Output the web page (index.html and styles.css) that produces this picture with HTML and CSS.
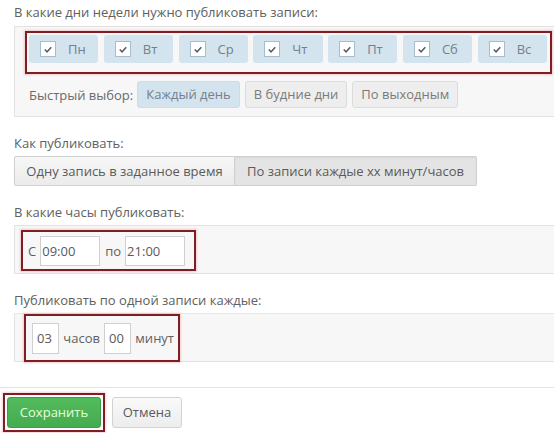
FILE: index.html
```html
<!DOCTYPE html>
<html lang="ru">
<head>
<meta charset="utf-8">
<link rel="stylesheet" href="styles.css">
</head>
<body>
<div class="page">
  <div class="label first">В какие дни недели нужно публиковать записи:</div>
  <div class="panel days-panel">
    <div class="mark days-mark">
      <div class="days">
        <div class="day"><span class="cb"><svg viewBox="0 0 15 15" width="15" height="15"><polyline points="4,7.5 6.5,10 11,5" /></svg></span><span>Пн</span></div>
        <div class="day"><span class="cb"><svg viewBox="0 0 15 15" width="15" height="15"><polyline points="4,7.5 6.5,10 11,5" /></svg></span><span>Вт</span></div>
        <div class="day"><span class="cb"><svg viewBox="0 0 15 15" width="15" height="15"><polyline points="4,7.5 6.5,10 11,5" /></svg></span><span>Ср</span></div>
        <div class="day"><span class="cb"><svg viewBox="0 0 15 15" width="15" height="15"><polyline points="4,7.5 6.5,10 11,5" /></svg></span><span>Чт</span></div>
        <div class="day"><span class="cb"><svg viewBox="0 0 15 15" width="15" height="15"><polyline points="4,7.5 6.5,10 11,5" /></svg></span><span>Пт</span></div>
        <div class="day"><span class="cb"><svg viewBox="0 0 15 15" width="15" height="15"><polyline points="4,7.5 6.5,10 11,5" /></svg></span><span>Сб</span></div>
        <div class="day"><span class="cb"><svg viewBox="0 0 15 15" width="15" height="15"><polyline points="4,7.5 6.5,10 11,5" /></svg></span><span>Вс</span></div>
      </div>
    </div>
    <div class="quick">
      <span class="quick-label">Быстрый выбор:</span>
      <span class="qbtn active">Каждый день</span>
      <span class="qbtn">В будние дни</span>
      <span class="qbtn">По выходным</span>
    </div>
  </div>

  <div class="label">Как публиковать:</div>
  <div class="toggle">
    <span class="tbtn">Одну запись в заданное время</span>
    <span class="tbtn on">По записи каждые хх минут/часов</span>
  </div>

  <div class="label">В какие часы публиковать:</div>
  <div class="panel hours-panel">
    <div class="mark hours-mark">
      <span>С</span><span class="inp wide">09:00</span>
      <span class="po">по</span><span class="inp wide">21:00</span>
    </div>
  </div>

  <div class="label">Публиковать по одной записи каждые:</div>
  <div class="panel every-panel">
    <div class="mark every-mark">
      <span class="inp narrow">03</span><span class="unit">часов</span>
      <span class="inp narrow">00</span><span class="unit">минут</span>
    </div>
  </div>
</div>
<div class="footer">
  <div class="mark save-mark"><span class="btn save">Сохранить</span></div>
  <span class="btn cancel">Отмена</span>
</div>
</body>
</html>
```

FILE: styles.css
```css
html, body {
  margin: 0;
  padding: 0;
  background: #fff;
  overflow: hidden;
}
body {
  font-family: "Open Sans", "Liberation Sans", sans-serif;
  font-size: 13px;
  color: #606060;
  width: 554px;
  height: 433px;
}
.page {
  padding-left: 14px;
}
.label {
  line-height: 18px;
  height: 18px;
  margin-top: 17px;
  margin-bottom: 4px;
  white-space: nowrap;
}
.label.first {
  margin-top: 3px;
  margin-bottom: 5px;
}
.panel {
  background: #f7f7f7;
  border: 1px solid #e2e2e2;
  width: 560px;
  box-sizing: border-box;
}
.mark {
  border: 2px solid #7d1e24;
  box-shadow: 0 0 2px 1px rgba(230, 120, 120, 0.35);
  box-sizing: border-box;
}
.days-panel {
  height: 91px;
  padding: 4px 0 0 10px;
}
.days-mark {
  width: 527px;
  height: 43px;
  padding: 2px 3px 0 2px;
}
.days {
  display: flex;
  gap: 5.5px;
}
.day {
  flex: 1;
  height: 28px;
  background: #d3e4ef;
  border-radius: 3px;
  display: flex;
  align-items: center;
  padding-left: 11px;
  color: #75808a;
}
.cb {
  width: 16px;
  height: 16px;
  background: #fff;
  border: 1px solid #a9bccb;
  box-sizing: border-box;
  margin-right: 12px;
  display: flex;
  align-items: center;
  justify-content: center;
}
.cb svg {
  display: block;
}
.cb polyline {
  fill: none;
  stroke: #555c63;
  stroke-width: 1.6;
}
.quick {
  display: flex;
  align-items: center;
  margin-top: 7px;
  padding-left: 4px;
  gap: 5px;
  white-space: nowrap;
}
.quick-label {
  margin-right: -1px;
  color: #6a6a6a;
}
.qbtn {
  height: 27px;
  line-height: 25px;
  box-sizing: border-box;
  padding: 0 8px;
  border: 1px solid #dcdcdc;
  background: #eeeeee;
  border-radius: 3px;
  color: #7a7a7a;
}
.qbtn.active {
  background: #d3e4ef;
  border-color: #cbdde9;
  color: #75808a;
}
.toggle {
  display: flex;
  height: 30px;
  white-space: nowrap;
}
.tbtn {
  box-sizing: border-box;
  height: 30px;
  line-height: 28px;
  text-align: center;
  border: 1px solid #cfcfcf;
  background: linear-gradient(#f7f7f7, #ebebeb);
  color: #5a5a5a;
}
.tbtn:first-child {
  border-radius: 2px 0 0 2px;
  width: 221px;
}
.tbtn.on {
  background: #e4e4e4;
  border-left: none;
  border-radius: 0 2px 2px 0;
  width: 242px;
  box-shadow: inset 0 1px 2px rgba(0,0,0,0.06);
}
.hours-panel {
  height: 49px;
  padding: 4px 0 0 6px;
}
.hours-mark {
  width: 175px;
  height: 41px;
  display: flex;
  align-items: center;
  padding-left: 5px;
}
.inp {
  box-sizing: border-box;
  background: #fff;
  border: 1px solid #d0d0d0;
  color: #5a5a5a;
  display: flex;
  align-items: center;
}
.inp.wide {
  width: 60px;
  height: 30px;
  margin-left: 4px;
  padding-left: 1px;
}
.po {
  margin-left: 5px;
}
.every-panel {
  height: 49px;
  padding: 0 0 0 9px;
  border-top-color: #e8e8e8;
}
.every-mark {
  width: 156px;
  height: 48px;
  display: flex;
  align-items: center;
  padding-left: 6px;
}
.inp.narrow {
  width: 28px;
  height: 31px;
  padding-left: 4px;
}
.unit {
  margin: 0 4px 0 4px;
}
.footer {
  margin-top: 25px;
  border-top: 1px solid #e3e3e3;
  display: flex;
  align-items: flex-start;
  padding: 5px 0 0 3px;
}
.save-mark {
  padding: 2px;
  border-width: 2px;
}
.btn {
  display: block;
  box-sizing: border-box;
  height: 31px;
  line-height: 29px;
  border-radius: 3px;
}
.save {
  width: 94px;
  text-align: center;
  background: linear-gradient(#52bb5c, #45ab4f);
  border: 1px solid #3e9e47;
  color: #e6ffd8;
}
.cancel {
  margin-top: 4px;
  margin-left: 7px;
  width: 70px;
  text-align: center;
  background: linear-gradient(#fafafa, #ececec);
  border: 1px solid #d2d2d2;
  color: #5a5a5a;
}
```
